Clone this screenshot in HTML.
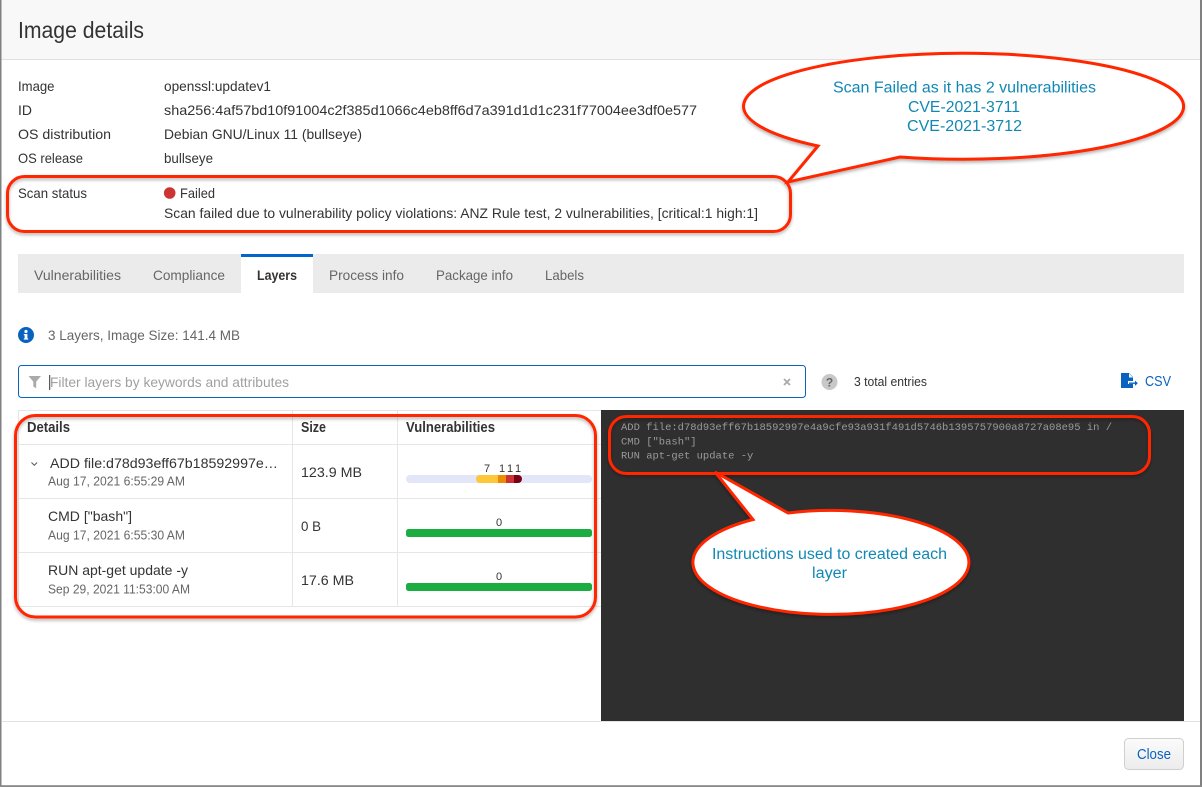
<!DOCTYPE html>
<html lang="en"><head><meta charset="utf-8"><title>Image details</title>
<style>
html,body{margin:0;padding:0;background:#fff;width:1202px;height:787px;overflow:hidden}
svg{display:block}
text{font-family:"Liberation Sans",sans-serif;font-size:14px;fill:#333}
.g{fill:#666;font-size:12.5px}
.b{font-weight:bold;font-size:14.5px;fill:#333}
.t{fill:#666;font-size:14px}
.m{font-family:"Liberation Mono",monospace;font-size:10.5px;fill:#9a9a9a}
.c{fill:#1188b4;font-size:15.5px}
.n{font-size:11px;fill:#333}
.r{fill:none;stroke:#ff2600;stroke-width:3}
.l{stroke:#e6e6e6;stroke-width:1}
</style></head><body>
<svg width="1202" height="787" viewBox="0 0 1202 787" xmlns="http://www.w3.org/2000/svg">
<defs>
<filter id="s" x="-5%" y="-10%" width="110%" height="125%"><feDropShadow dx="0" dy="2" stdDeviation="1.5" flood-color="#000" flood-opacity=".3"/></filter>
<linearGradient id="btn" x1="0" y1="0" x2="0" y2="1"><stop offset="0" stop-color="#fbfbfb"/><stop offset="1" stop-color="#ececec"/></linearGradient>
</defs>
<rect width="1202" height="787" fill="#fff"/>
<rect x="0" y="0" width="1202" height="59" fill="#f8f8f8"/>
<line x1="0" y1="59.5" x2="1202" y2="59.5" stroke="#e0e0e0"/>
<rect x="0" y="0" width="1.5" height="787" fill="#808080"/>
<rect x="1200" y="0" width="2" height="787" fill="#808080"/>
<rect x="0" y="785.2" width="1202" height="1.8" fill="#888"/>

<text x="18" y="38" style="font-size:23px" textLength="126" lengthAdjust="spacingAndGlyphs">Image details</text>

<text x="18" y="91" textLength="36.5" lengthAdjust="spacingAndGlyphs">Image</text>
<text x="18" y="115" textLength="14" lengthAdjust="spacingAndGlyphs">ID</text>
<text x="18" y="139" textLength="93" lengthAdjust="spacingAndGlyphs">OS distribution</text>
<text x="18" y="163" textLength="65" lengthAdjust="spacingAndGlyphs">OS release</text>
<text x="18" y="198" textLength="69" lengthAdjust="spacingAndGlyphs">Scan status</text>
<text x="164" y="91" textLength="107" lengthAdjust="spacingAndGlyphs">openssl:updatev1</text>
<text x="164" y="115" textLength="533" lengthAdjust="spacingAndGlyphs">sha256:4af57bd10f91004c2f385d1066c4eb8ff6d7a391d1d1c231f77004ee3df0e577</text>
<text x="164" y="139" textLength="198" lengthAdjust="spacingAndGlyphs">Debian GNU/Linux 11 (bullseye)</text>
<text x="164" y="163" textLength="49" lengthAdjust="spacingAndGlyphs">bullseye</text>
<circle cx="169.7" cy="193" r="5.8" fill="#cc3333"/>
<text x="180" y="198" textLength="35" lengthAdjust="spacingAndGlyphs">Failed</text>
<text x="164" y="218" textLength="594" lengthAdjust="spacingAndGlyphs">Scan failed due to vulnerability policy violations: ANZ Rule test, 2 vulnerabilities, [critical:1 high:1]</text>

<!-- tabs -->
<rect x="18" y="254" width="1166" height="39" fill="#ebebeb"/>
<rect x="241" y="254" width="72" height="40" fill="#fff"/>
<rect x="241" y="254" width="72" height="3" fill="#0066cc"/>
<text class="t" x="34" y="280" textLength="87" lengthAdjust="spacingAndGlyphs">Vulnerabilities</text>
<text class="t" x="153" y="280" textLength="72" lengthAdjust="spacingAndGlyphs">Compliance</text>
<text x="257" y="280" style="font-size:14px;font-weight:bold" textLength="40" lengthAdjust="spacingAndGlyphs">Layers</text>
<text class="t" x="329" y="280" textLength="75" lengthAdjust="spacingAndGlyphs">Process info</text>
<text class="t" x="436" y="280" textLength="77" lengthAdjust="spacingAndGlyphs">Package info</text>
<text class="t" x="545" y="280" textLength="39" lengthAdjust="spacingAndGlyphs">Labels</text>

<!-- info -->
<circle cx="26" cy="335" r="8" fill="#0a62c0"/>
<rect x="24.6" y="334" width="2.8" height="5" fill="#fff"/>
<rect x="23.8" y="334" width="2" height="1.2" fill="#fff"/>
<rect x="23.8" y="338.4" width="4.4" height="1.2" fill="#fff"/>
<circle cx="26" cy="331.5" r="1.6" fill="#fff"/>
<text x="48" y="340" style="fill:#666" textLength="192" lengthAdjust="spacingAndGlyphs">3 Layers, Image Size: 141.4 MB</text>

<!-- filter -->
<rect x="18.5" y="365.5" width="787" height="32" rx="3" fill="#fff" stroke="#0a62c0"/>
<path d="M28.5 376h12.5l-4.8 5.6v6.6l-2.9-1.7v-4.9z" fill="#aaa"/>
<rect x="49.2" y="375" width="1" height="15" fill="#333"/>
<text x="50" y="387" style="fill:#a0a0a0" textLength="239" lengthAdjust="spacingAndGlyphs">Filter layers by keywords and attributes</text>
<path d="M784 379l6 6M790 379l-6 6" stroke="#aaa" stroke-width="1.8" fill="none"/>
<circle cx="829.5" cy="382" r="8" fill="#c8c8c8"/>
<text x="829.5" y="386.5" text-anchor="middle" style="font-size:12px;font-weight:bold;fill:#666">?</text>
<text x="854" y="386" style="font-size:12.5px" textLength="73" lengthAdjust="spacingAndGlyphs">3 total entries</text>
<path d="M1121 373h8l4 4v4h-5v3h5v4h-12z" fill="#0a62c0"/>
<path d="M1129 373.5v4h4z" fill="#fff"/>
<path d="M1129 382.5h6v-2l2.8 2.7-2.8 2.7v-2h-6z" fill="#0a62c0"/>
<text x="1145" y="386" style="font-size:15px;fill:#0a62c0" textLength="26" lengthAdjust="spacingAndGlyphs">CSV</text>

<!-- table -->
<line class="l" x1="18" y1="410.5" x2="601" y2="410.5"/>
<line class="l" x1="18" y1="444.5" x2="601" y2="444.5"/>
<line class="l" x1="18" y1="498.5" x2="601" y2="498.5"/>
<line class="l" x1="18" y1="552.5" x2="601" y2="552.5"/>
<line class="l" x1="18" y1="606.5" x2="601" y2="606.5"/>
<line class="l" x1="18.5" y1="410" x2="18.5" y2="607"/>
<line class="l" x1="292.5" y1="410" x2="292.5" y2="607"/>
<line class="l" x1="397.5" y1="410" x2="397.5" y2="607"/>

<text class="b" x="27" y="432" textLength="43" lengthAdjust="spacingAndGlyphs">Details</text>
<text class="b" x="301" y="432" textLength="25" lengthAdjust="spacingAndGlyphs">Size</text>
<text class="b" x="406" y="432" textLength="89" lengthAdjust="spacingAndGlyphs">Vulnerabilities</text>

<path d="M31.5 462.5l2.8 2.8 2.8-2.8" fill="none" stroke="#555" stroke-width="1"/>
<text x="50" y="468" textLength="228" lengthAdjust="spacingAndGlyphs">ADD file:d78d93eff67b18592997e…</text>
<text class="g" x="48" y="485.5" textLength="137" lengthAdjust="spacingAndGlyphs">Aug 17, 2021 6:55:29 AM</text>
<text x="301" y="477" textLength="61" lengthAdjust="spacingAndGlyphs">123.9 MB</text>
<text x="48" y="521" textLength="84" lengthAdjust="spacingAndGlyphs">CMD ["bash"]</text>
<text class="g" x="48" y="539.5" textLength="137" lengthAdjust="spacingAndGlyphs">Aug 17, 2021 6:55:30 AM</text>
<text x="301" y="531" textLength="20" lengthAdjust="spacingAndGlyphs">0 B</text>
<text x="48" y="575" textLength="140" lengthAdjust="spacingAndGlyphs">RUN apt-get update -y</text>
<text class="g" x="48" y="593.5" textLength="142" lengthAdjust="spacingAndGlyphs">Sep 29, 2021 11:53:00 AM</text>
<text x="301" y="585" textLength="53" lengthAdjust="spacingAndGlyphs">17.6 MB</text>

<!-- bars -->
<rect x="406" y="475" width="186" height="8" rx="4" fill="#e2e6f8"/>
<path d="M480 475h18v8h-18a4 4 0 0 1 0-8z" fill="#fdc73c"/>
<rect x="498" y="475" width="8" height="8" fill="#ef8a05"/>
<rect x="506" y="475" width="8" height="8" fill="#cc3333"/>
<path d="M514 475h4a4 4 0 0 1 0 8h-4z" fill="#7a0018"/>
<text class="n" x="487" y="472" text-anchor="middle">7</text>
<text class="n" x="502" y="472" text-anchor="middle">1</text>
<text class="n" x="510" y="472" text-anchor="middle">1</text>
<text class="n" x="518" y="472" text-anchor="middle">1</text>
<rect x="406" y="529" width="186" height="8" rx="2.5" fill="#1bad3f"/>
<text class="n" x="499" y="526" text-anchor="middle">0</text>
<rect x="406" y="583" width="186" height="8" rx="2.5" fill="#1bad3f"/>
<text class="n" x="499" y="580" text-anchor="middle">0</text>

<!-- dark panel -->
<rect x="601" y="410" width="583" height="311" fill="#2f2f2f"/>
<text class="m" x="621" y="430" textLength="491">ADD file:d78d93eff67b18592997e4a9cfe93a931f491d5746b1395757900a8727a08e95 in /</text>
<text class="m" x="621" y="444.5">CMD ["bash"]</text>
<text class="m" x="621" y="458.5">RUN apt-get update -y</text>

<!-- footer -->
<line x1="2" y1="721.5" x2="1200" y2="721.5" stroke="#e2e2e2"/>
<rect x="1124.5" y="738.5" width="59" height="31" rx="4" fill="url(#btn)" stroke="#cfcfcf"/>
<text x="1137" y="759" style="font-size:15px;fill:#0a62c0" textLength="34" lengthAdjust="spacingAndGlyphs">Close</text>

<!-- annotations -->
<g filter="url(#s)">
<rect class="r" x="7.5" y="176.5" width="783" height="55" rx="17"/>
<rect class="r" x="15.5" y="415.5" width="580" height="201.5" rx="20"/>
<rect class="r" x="609.5" y="416.5" width="540" height="57" rx="17"/>
<path d="M818 146L788 182L900 157A220 53 0 1 0 818 146Z" fill="#fff" stroke="#ff2600" stroke-width="3" stroke-linejoin="miter"/>
<path d="M753 519.5L715 472L788 513A138 52 0 1 1 753 519.5Z" fill="#fff" stroke="#ff2600" stroke-width="3" stroke-linejoin="miter"/>
</g>
<text class="c" x="833" y="92.5" textLength="263" lengthAdjust="spacingAndGlyphs">Scan Failed as it has 2 vulnerabilities</text>
<text class="c" x="908" y="112" textLength="112" lengthAdjust="spacingAndGlyphs">CVE-2021-3711</text>
<text class="c" x="907" y="131" textLength="115" lengthAdjust="spacingAndGlyphs">CVE-2021-3712</text>
<text class="c" x="712" y="559" textLength="235" lengthAdjust="spacingAndGlyphs">Instructions used to created each</text>
<text class="c" x="812" y="578" textLength="35" lengthAdjust="spacingAndGlyphs">layer</text>
</svg>
</body></html>
